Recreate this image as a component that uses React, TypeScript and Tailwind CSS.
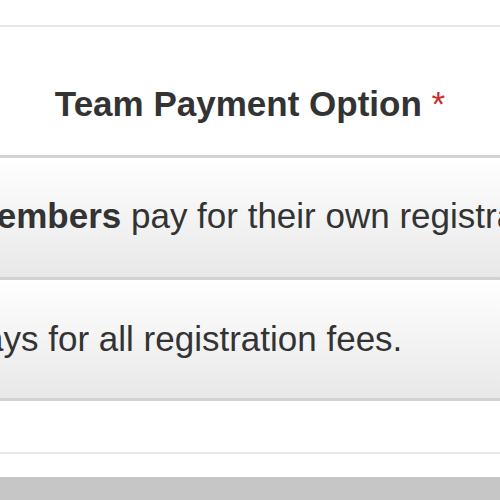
export default function App() {
  return (
    <div className="w-[500px] h-[500px] overflow-hidden bg-white font-['Liberation_Sans',Arial,sans-serif] text-[#333333]">
      {/* top spacer + divider */}
      <div className="h-[25px]" />
      <div className="border-t-2 border-[#e6e6e6]" />

      {/* Section title */}
      <div className="h-[128px] pt-[57px] text-center">
        <h2 className="text-[35px] leading-[40px] font-bold whitespace-nowrap">
          Team Payment Option <span className="font-normal text-[#c9302c]">*</span>
        </h2>
      </div>

      {/* Option buttons */}
      <div className="border-t-[3px] border-[#d2d2d2]">
        <button className="flex h-[122px] w-full items-center border-b-[3px] border-[#d2d2d2] bg-linear-to-b from-white to-[#e8e8e8] pb-[3px] text-left">
          <span className="-ml-[131px] whitespace-nowrap text-[35px] leading-[40px]">
            <b>Team Members</b> pay for their own registration fees.
          </span>
        </button>
        <button className="flex h-[121px] w-full items-center border-b-[3px] border-[#d2d2d2] bg-linear-to-b from-white to-[#e8e8e8] text-left">
          <span className="-ml-[272px] whitespace-nowrap text-[35px] leading-[40px]">
            <b>Team Captain</b> pays for all registration fees.
          </span>
        </button>
      </div>

      {/* Footer area */}
      <div className="h-[51px]" />
      <div className="border-t-2 border-[#e8e8e8]" />
      <div className="h-[23px]" />
      <div className="h-[40px] bg-[#c6c6c6]" />
    </div>
  );
}
